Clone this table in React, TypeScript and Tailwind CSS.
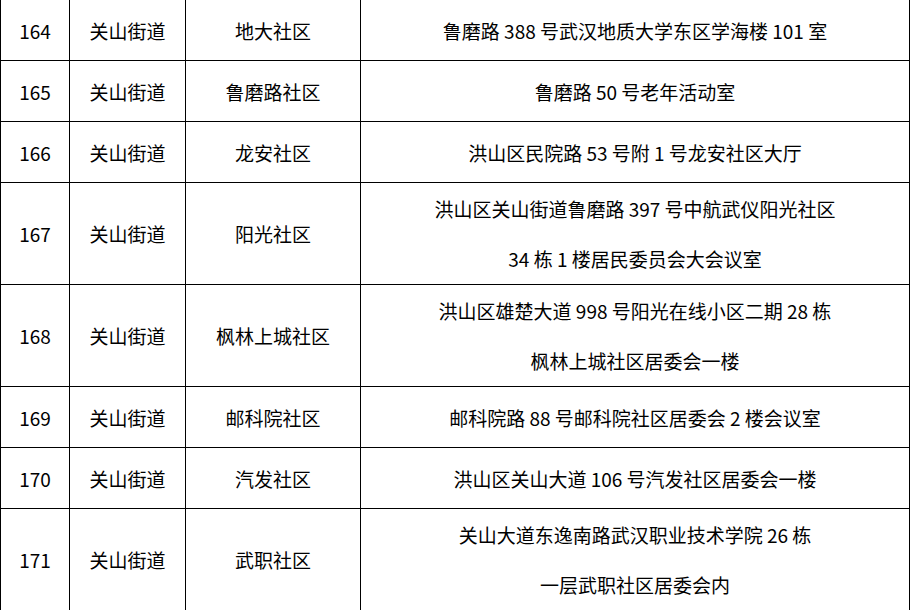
const ROWS: { no: string; street: string; community: string; address: string[] }[] = [
  { no: '164', street: '关山街道', community: '地大社区', address: ['鲁磨路 388 号武汉地质大学东区学海楼 101 室'] },
  { no: '165', street: '关山街道', community: '鲁磨路社区', address: ['鲁磨路 50 号老年活动室'] },
  { no: '166', street: '关山街道', community: '龙安社区', address: ['洪山区民院路 53 号附 1 号龙安社区大厅'] },
  {
    no: '167',
    street: '关山街道',
    community: '阳光社区',
    address: ['洪山区关山街道鲁磨路 397 号中航武仪阳光社区', '34 栋 1 楼居民委员会大会议室'],
  },
  {
    no: '168',
    street: '关山街道',
    community: '枫林上城社区',
    address: ['洪山区雄楚大道 998 号阳光在线小区二期 28 栋', '枫林上城社区居委会一楼'],
  },
  { no: '169', street: '关山街道', community: '邮科院社区', address: ['邮科院路 88 号邮科院社区居委会 2 楼会议室'] },
  { no: '170', street: '关山街道', community: '汽发社区', address: ['洪山区关山大道 106 号汽发社区居委会一楼'] },
  {
    no: '171',
    street: '关山街道',
    community: '武职社区',
    address: ['关山大道东逸南路武汉职业技术学院 26 栋', '一层武职社区居委会内'],
  },
];

const cell = 'border border-black px-0 pt-px pb-0 h-[61px] text-center align-middle';

export default function App() {
  return (
    <div className="w-[911px] h-[610px] overflow-hidden bg-white">
      <table
        className="-mt-px w-[910px] border-collapse table-fixed text-[19px] leading-[50px] text-black"
        style={{ fontFamily: '"Noto Sans CJK SC", "Noto Sans", sans-serif' }}
      >
        <colgroup>
          <col className="w-[69px]" />
          <col className="w-[116px]" />
          <col className="w-[175px]" />
          <col />
        </colgroup>
        <tbody>
          {ROWS.map((row) => (
            <tr key={row.no}>
              <td className={cell}>{row.no}</td>
              <td className={cell}>{row.street}</td>
              <td className={cell}>{row.community}</td>
              <td className={cell}>
                {row.address.map((line) => (
                  <div key={line}>{line}</div>
                ))}
              </td>
            </tr>
          ))}
        </tbody>
      </table>
    </div>
  );
}
